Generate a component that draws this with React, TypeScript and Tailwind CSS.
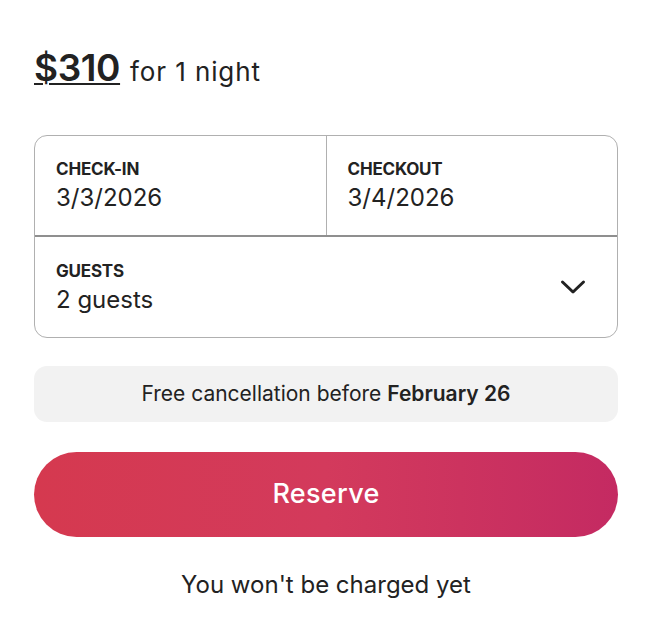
import React from "react";

export default function App() {
  const font = { fontFamily: "Inter, 'Noto Sans', sans-serif" };
  return (
    <div className="w-[654px] h-[634px] bg-white text-[#222222] pl-[34px] pr-[36px] pt-[40px]" style={font}>
      <div className="flex items-baseline gap-[10px] h-[44px]">
        <span className="text-[37px] font-semibold underline decoration-[2px] underline-offset-[2px] tracking-[-0.4px]">$310</span>
        <span className="text-[26px] tracking-[0.9px]">for 1 night</span>
      </div>

      <div className="mt-[51px] border border-[#b0b0b0] rounded-[13px] overflow-hidden">
        <div className="flex h-[101px] border-b-[2px] border-[#8f8f8f]">
          <div className="flex-1 border-r border-[#b0b0b0] pl-[21px] pt-[23px]">
            <div className="text-[17px] font-bold leading-[20px] tracking-[-0.2px]">CHECK-IN</div>
            <div className="text-[24px] leading-[32px] mt-[3px]">3/3/2026</div>
          </div>
          <div className="flex-1 pl-[21px] pt-[23px]">
            <div className="text-[17px] font-bold leading-[20px] tracking-[-0.2px]">CHECKOUT</div>
            <div className="text-[24px] leading-[32px] mt-[3px]">3/4/2026</div>
          </div>
        </div>
        <div className="flex items-center h-[100px] pl-[21px] pr-[31px]">
          <div className="flex-1 pt-[2px]">
            <div className="text-[17px] font-bold leading-[20px] tracking-[-0.2px]">GUESTS</div>
            <div className="text-[24px] leading-[32px] mt-[3px]">2 guests</div>
          </div>
          <svg width="26" height="16" viewBox="0 0 26 16" fill="none">
            <path d="M2.5 3 L13 13 L23.5 3" stroke="#222222" strokeWidth="3" strokeLinecap="round" strokeLinejoin="round" />
          </svg>
        </div>
      </div>

      <div className="mt-[28px] h-[56px] rounded-[13px] bg-[#f2f2f2] flex items-center justify-center text-[21px]">
        <span>Free cancellation before&nbsp;</span>
        <span className="font-semibold">February 26</span>
      </div>

      <button className="mt-[30px] w-full h-[85px] rounded-full bg-gradient-to-r from-[#d5394f] via-[#d33a5c] to-[#c42a62] text-white text-[27px] font-medium tracking-[0.3px] flex items-center justify-center">
        Reserve
      </button>

      <div className="mt-[30px] text-center text-[24px]">You won't be charged yet</div>
    </div>
  );
}
